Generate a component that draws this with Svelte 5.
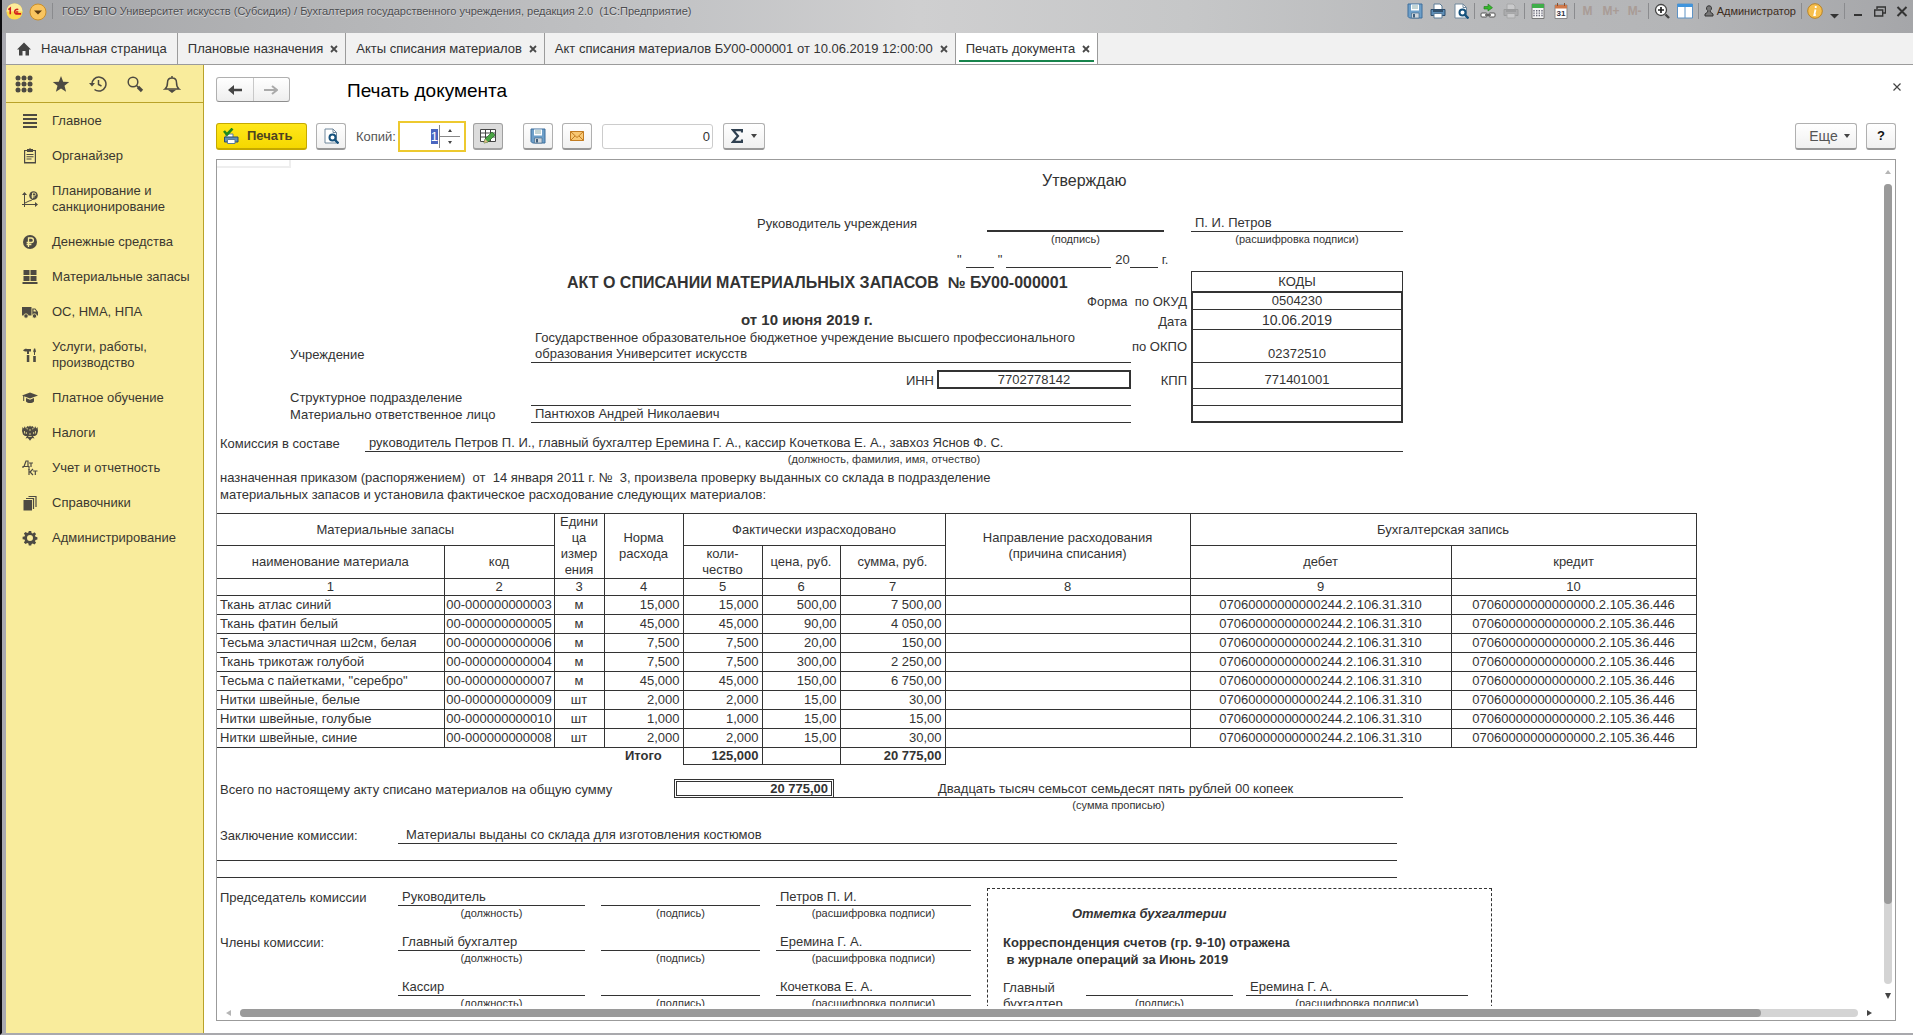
<script>
  import { onMount } from 'svelte';

  let copiesField;
  onMount(() => {
    copiesField.focus();
    copiesField.select();
  });

  const tabs = [
    'Плановые назначения',
    'Акты списания материалов',
    'Акт списания материалов БУ00-000001 от 10.06.2019 12:00:00',
    'Печать документа'
  ];

  const menu = [
    { icon: 'lines', label: 'Главное' },
    { icon: 'clipboard', label: 'Органайзер' },
    { icon: 'plan', label: 'Планирование и санкционирование' },
    { icon: 'ruble', label: 'Денежные средства' },
    { icon: 'boxes', label: 'Материальные запасы' },
    { icon: 'truck', label: 'ОС, НМА, НПА' },
    { icon: 'tools', label: 'Услуги, работы, производство' },
    { icon: 'cap', label: 'Платное обучение' },
    { icon: 'eagle', label: 'Налоги' },
    { icon: 'dtkt', label: 'Учет и отчетность' },
    { icon: 'books', label: 'Справочники' },
    { icon: 'gear', label: 'Администрирование' }
  ];

  const debit = '07060000000000244.2.106.31.310';
  const credit = '07060000000000000.2.105.36.446';
  const items = [
    ['Ткань атлас синий', '00-000000000003', 'м', '15,000', '500,00', '7 500,00'],
    ['Ткань фатин белый', '00-000000000005', 'м', '45,000', '90,00', '4 050,00'],
    ['Тесьма эластичная ш2см, белая', '00-000000000006', 'м', '7,500', '20,00', '150,00'],
    ['Ткань трикотаж голубой', '00-000000000004', 'м', '7,500', '300,00', '2 250,00'],
    ['Тесьма с пайетками, "серебро"', '00-000000000007', 'м', '45,000', '150,00', '6 750,00'],
    ['Нитки швейные, белые', '00-000000000009', 'шт', '2,000', '15,00', '30,00'],
    ['Нитки швейные, голубые', '00-000000000010', 'шт', '1,000', '15,00', '15,00'],
    ['Нитки швейные, синие', '00-000000000008', 'шт', '2,000', '15,00', '30,00']
  ];

  const members = [
    ['Председатель комиссии', 'Руководитель', 'Петров П. И.'],
    ['Члены комиссии:', 'Главный бухгалтер', 'Еремина Г. А.'],
    ['', 'Кассир', 'Кочеткова Е. А.']
  ];
</script>

{#snippet menuIcon(name)}
  <svg class="mi" viewBox="0 0 16 16" fill="#4d4a42" stroke="none" aria-hidden="true">
    {#if name === 'lines'}
      <path d="M1 1h14v2H1zM1 5h14v2H1zM1 9h14v2H1zM1 13h14v2H1z" />
    {:else if name === 'clipboard'}
      <path d="M2 2h3v1H3.2v11h9.6V3H11V2h3v13.5H2z" /><path d="M5 1h2l1-1 1 1h2v3H5zM4.5 6h7v1h-7zM4.5 8.3h7v1h-7zM4.5 10.600h5v1h-5z" />
    {:else if name === 'plan'}
      <path d="M2 3h1v10h11v1H3v2H2v-2H0v-1h2z" /><path d="M0 4l2.500-3L5 4zM13 11l3 2.500-3 2.500z" /><path d="M3 12l4-2 2-.5 3-2" fill="none" stroke="#4d4a42" />
      <circle cx="11.500" cy="4.500" r="4.300" /><path d="M10.500 7.500v-5.500h1.800a1.400 1.400 0 0 1 0 2.800H9.500m0 1.200h3" fill="none" stroke="#f9ec9c" stroke-width=".9" />
    {:else if name === 'ruble'}
      <circle cx="8" cy="8" r="7" /><path d="M6.500 13V4h2.700a2.200 2.200 0 0 1 0 4.500H4.600m0 2h4.800" fill="none" stroke="#f9ec9c" stroke-width="1.300" />
    {:else if name === 'boxes'}
      <path d="M1.500 1h6v5h-6zM8.500 1h6v5h-6zM1.500 7h6v5h-6zM8.500 7h6v5h-6zM.5 13h15v2H.5z" />
    {:else if name === 'truck'}
      <path d="M0 3h9.500v8.500H0zM10.300 4.500h3l2.700 3.500v3.500h-5.700z" /><path d="M11.500 5.500h1.400l1.500 2h-2.900z" fill="#f9ec9c" />
      <circle cx="4" cy="12" r="2.200" stroke="#f9ec9c" stroke-width=".8" /><circle cx="12.500" cy="12" r="2.200" stroke="#f9ec9c" stroke-width=".8" />
    {:else if name === 'tools'}
      <path d="M1 3.500C2 2 4 1.500 5 2h4v2.500H7V7H5V4.500H3zM4.800 8h2.500v7H4.800zM12 1.500h1.200l.8 3-1 1V8h-1V5.500l-.8-1zM11.200 9h2.600v6h-2.600z" />
    {:else if name === 'cap'}
      <path d="M8 2.500L16 5.500 8 8.500 0 5.500z" /><path d="M4 8l4 1.700L12 8v3.500c-2 2-6 2-8 0zM1.200 6h1v5h-1z" />
    {:else if name === 'eagle'}
      <path d="M8 .5l1 1.300 1.500-.8 1 1.500L10 4l1 .5 1-3 .8 2 .8-2.500.6 2.500 1.300-1.500.5 4-1 3.500-2 1.500-2 0 1.500 2.500-2-.5-1 .7L8 15.800l-1.500-2.100-1-.7-2 .5L5 11 3 11 1 9.500 0 6l.5-4L1.800 3.500 2.400 1l.8 2.500.8-2 1 3L6 4 4.500 2.500 5.500 1l1.500.8z" />
      <path d="M2.500 6v2.500M4.300 7v2M11.700 7v2M13.500 6v2.500M8 4v2M6.300 11.500h3.400M8 8v2" stroke="#f9ec9c" stroke-width=".8" />
    {:else if name === 'dtkt'}
      <path d="M1 8V6.500h6V8M2 6.500L4 1h2v5.500M7 3h4M9 3v4M7 9v6M6 9h2M11 9L8 12l3 3M11 11h4.500M13.300 11v4" fill="none" stroke="#4d4a42" stroke-width="1.200" />
    {:else if name === 'books'}
      <path d="M1.500 5h8.500v10.500H1.500z" /><path d="M4 3.500h7.500V14M6.500 1.500H14V12" fill="none" stroke="#4d4a42" stroke-width="1.200" />
    {:else}
      <path fill-rule="evenodd" d="M6.800 1h2.400l.4 1.900 1.200.5 1.600-1.100 1.700 1.700-1.100 1.600.5 1.200 1.900.4v2.400l-1.900.4-.5 1.200 1.100 1.600-1.700 1.700-1.600-1.100-1.200.5L9.200 15.400H6.800l-.4-1.900-1.200-.5-1.600 1.100-1.700-1.700L3 10.800l-.5-1.200-1.900-.4V6.800l1.900-.4L3 5.200 1.900 3.600l1.700-1.700L5.200 3l1.200-.5zM8 5a3 3 0 1 0 0 6 3 3 0 0 0 0-6z" />
    {/if}
  </svg>
{/snippet}

{#snippet floppy()}
  <svg class="i16" viewBox="0 0 16 16" aria-hidden="true"><path d="M1 1h14v14H2.500L1 13.500z" fill="#6d9fc9" stroke="#3f6f9c" /><path d="M4 1.500h8v6H4z" fill="#fff" /><path d="M5 3h6M5 5h6" stroke="#8aa" /><path d="M4.500 10h7.500v5H4.500z" fill="#cfd6dd" stroke="#49708f" stroke-width=".7" /><path d="M6 11h2v3.500H6z" fill="#3f5f7c" /></svg>
{/snippet}

{#snippet preview()}
  <svg class="i16" viewBox="0 0 16 16" aria-hidden="true"><path d="M2 1h8l3.500 3.500V15H2z" fill="#fff" stroke="#71889c" /><path d="M10 1v3.500h3.500" fill="none" stroke="#71889c" /><circle cx="9.500" cy="9.500" r="3" fill="#fff" stroke="#15517c" stroke-width="2" /><path d="M11.500 11.500l4 4" stroke="#15517c" stroke-width="2.400" /></svg>
{/snippet}

{#snippet printer(dim)}
  <svg class="i16" class:dim viewBox="0 0 16 16" aria-hidden="true"><path d="M4 1h6l2 2v4H4z" fill="#fff" stroke="#5c7c98" /><path d="M1 6.500h14v6H1z" fill="#5f8fb8" stroke="#2d4d6c" /><path d="M3 8h10" stroke="#233c55" stroke-width="1.500" /><path d="M4 10.500h8V15H4z" fill="#fff" stroke="#5c7c98" /></svg>
{/snippet}

{#snippet cross()}
  <svg class="cross" viewBox="0 0 8 8" aria-hidden="true"><path d="M1 1l6 6M7 1L1 7" stroke="#4a4a4a" stroke-width="1.800" /></svg>
{/snippet}

{#snippet tri()}
  <svg class="tri" viewBox="0 0 6 4" aria-hidden="true"><path d="M0 0h6L3 4z" fill="#444" /></svg>
{/snippet}

<div class="app">
  <header class="titlebar">
    <svg class="logo" viewBox="0 0 18 18" aria-hidden="true"><circle cx="9" cy="9" r="8.500" fill="#fbd94c" /><path d="M9 .5a8.500 8.500 0 0 1 8.500 8.500H.5A8.500 8.500 0 0 1 9 .5z" fill="#fdeb9a" /><path d="M2.500 7l2-1.500V12M13 7a2.500 2.500 0 1 0-2.500 4.500H16M13 9.500h-2.500" fill="none" stroke="#d3201d" stroke-width="1.700" /></svg>
    <button class="round" aria-label="Главное меню"><svg viewBox="0 0 18 18" aria-hidden="true"><circle cx="9" cy="9" r="8" fill="#f9c560" stroke="#c98f2c" /><path d="M5 7.500h8l-4 4z" fill="#5b3a10" /></svg></button>
    <span class="sep lead"></span>
    <span class="caption">ГОБУ ВПО Университет искусств (Субсидия) / Бухгалтерия государственного учреждения, редакция 2.0  (1С:Предприятие)</span>
    <div class="sys">
      <button aria-label="Сохранить">{@render floppy()}</button>
      <button aria-label="Печать">{@render printer(false)}</button>
      <button aria-label="Просмотр">{@render preview()}</button>
      <span class="sep"></span>
      <button aria-label="Получить ссылку"><svg class="i16" viewBox="0 0 16 16" aria-hidden="true"><path d="M4 3.500h4V1l4.500 3.700L8 8V6H4z" fill="#35b82c" stroke="#1d7a18" stroke-width=".6" /><rect x="1" y="10" width="6" height="4" rx="1" fill="#fff" stroke="#555" /><rect x="9" y="10" width="6" height="4" rx="1" fill="#fff" stroke="#555" /><path d="M5 12h6" stroke="#555" stroke-width="1.500" /></svg></button>
      <button aria-label="Перейти по ссылке">{@render printer(true)}</button>
      <span class="sep"></span>
      <button aria-label="Калькулятор"><svg class="i16" viewBox="0 0 16 16" aria-hidden="true"><path d="M2 1h12v14.500H2z" fill="#f5f5f5" stroke="#777" /><path d="M2 1h12v4H2z" fill="#3fae49" /><path d="M4 7v7M6.700 7v7M9.300 7v7M12 7v7" stroke="#667" stroke-width="1.400" stroke-dasharray="1.400 1" /></svg></button>
      <button aria-label="Календарь"><svg class="i16" viewBox="0 0 16 16" aria-hidden="true"><path d="M2 2h12v13.500H2z" fill="#fff" stroke="#888" /><path d="M2 2h12v3.500H2z" fill="#d0794b" /><path d="M4.500 0v3M11.500 0v3" stroke="#8a5030" /><text x="8" y="13" font-size="8" font-weight="bold" text-anchor="middle" fill="#334">31</text></svg></button>
      <span class="sep"></span>
      <button class="mem" disabled>M</button>
      <button class="mem" disabled>M+</button>
      <button class="mem" disabled>M-</button>
      <span class="sep"></span>
      <button aria-label="Масштаб"><svg class="i16" viewBox="0 0 16 16" aria-hidden="true"><circle cx="7" cy="7" r="5.500" fill="#fff" stroke="#444" stroke-width="1.300" /><path d="M7 4v6M4 7h6" stroke="#222" stroke-width="1.700" /><path d="M11.500 11.500l3.500 3.500" stroke="#444" stroke-width="2.400" /></svg></button>
      <button aria-label="Окна"><svg class="i16" viewBox="0 0 16 16" aria-hidden="true"><path d="M.5 1h15v14H.5z" fill="#fff" stroke="#5d92c4" /><path d="M.5 1h15v3H.5z" fill="#3f94dc" /><path d="M8 4v11" stroke="#5d92c4" /></svg></button>
      <span class="sep"></span>
      <button class="user"><svg viewBox="0 0 10 12" aria-hidden="true"><path d="M5 .8a2.300 2.500 0 0 1 1.300 4.700V7L9 9v2H1V9l2.700-2V5.500A2.300 2.500 0 0 1 5 .8z" fill="#777" stroke="#333" /></svg>Администратор</button>
      <span class="sep"></span>
      <button aria-label="Сведения"><svg class="i16" viewBox="0 0 16 16" aria-hidden="true"><circle cx="8" cy="8" r="7.300" fill="#f7bf4d" stroke="#b98325" /><path d="M8.700 3v2M8.500 6.500L7.300 12h1.500" fill="none" stroke="#fff" stroke-width="1.800" /></svg></button>
      <button class="drop" aria-label="Еще команды"><svg viewBox="0 0 9 6" aria-hidden="true"><path d="M0 1h9L4.500 5.500z" fill="#333" /></svg></button>
      <span class="sep"></span>
      <button class="win" aria-label="Свернуть"><svg viewBox="0 0 12 12" aria-hidden="true"><path d="M2 10h8" stroke="#333" stroke-width="2" /></svg></button>
      <button class="win" aria-label="Развернуть"><svg viewBox="0 0 12 12" aria-hidden="true"><path d="M3 4V2h8.500v6H9M.7 5h8v6h-8z" fill="none" stroke="#333" stroke-width="1.400" /></svg></button>
      <button class="win" aria-label="Закрыть"><svg viewBox="0 0 12 12" aria-hidden="true"><path d="M1.500 2l9 9M10.500 2l-9 9" stroke="#333" stroke-width="2" /></svg></button>
    </div>
  </header>

  <nav class="tabs">
    <div class="tab home">
      <button><svg viewBox="0 0 14 14" aria-hidden="true"><path d="M7 .5L14 7.500h-2V13.500H8.500V9h-3v4.500H2V7.500H0z" fill="#444" /></svg>Начальная страница</button>
    </div>
    {#each tabs as tab, i}
      <div class="tab" class:active={i === tabs.length - 1}>
        <button>{tab}</button>
        <button class="close" aria-label="Закрыть вкладку">{@render cross()}</button>
      </div>
    {/each}
  </nav>

  <div class="body">
    <aside class="side">
      <div class="quick">
        <button aria-label="Меню"><svg viewBox="0 0 18 18" fill="#4d4a42" aria-hidden="true">{#each [3, 9, 15] as y}{#each [3, 9, 15] as x}<circle cx={x} cy={y} r="2.500" />{/each}{/each}</svg></button>
        <button aria-label="Избранное"><svg viewBox="0 0 18 18" aria-hidden="true"><path d="M9 1l2.200 5.700 6 .3-4.700 3.800 1.600 5.900L9 13.400l-5.100 3.300 1.600-5.900L.8 7l6-.3z" fill="#4d4a42" /></svg></button>
        <button aria-label="История"><svg viewBox="0 0 18 18" fill="none" stroke="#4d4a42" stroke-width="1.500" aria-hidden="true"><path d="M3 10a7 7 0 1 1 2.500 4.500M9.500 5v4.500l3 1.500" /><path d="M0 8h6l-3 3.500z" fill="#4d4a42" stroke="none" /></svg></button>
        <button aria-label="Поиск"><svg viewBox="0 0 18 18" fill="none" stroke="#4d4a42" aria-hidden="true"><circle cx="7" cy="7" r="4.800" stroke-width="1.500" /><path d="M10.500 10.500l2 2" stroke-width="1.500" /><path d="M12 12l4 4" stroke-width="3.200" /></svg></button>
        <button aria-label="Оповещения"><svg viewBox="0 0 18 18" fill="none" stroke="#4d4a42" stroke-width="1.500" aria-hidden="true"><path d="M2 14c2-1.500 2.500-3 2.500-6.500C4.500 4.500 6.500 3 9 3s4.500 1.500 4.500 4.500c0 3.500.5 5 2.500 6.500zM9 1v2" /><path d="M7 15.500h4l-2 1.500z" fill="#4d4a42" /></svg></button>
      </div>
      <ul>
        {#each menu as m}
          <li><a href="#{m.icon}">{@render menuIcon(m.icon)}<span>{m.label}</span></a></li>
        {/each}
      </ul>
    </aside>

    <main>
      <div class="head">
        <div class="navbtns">
          <button aria-label="Назад"><svg viewBox="0 0 14 10" aria-hidden="true"><path d="M6 0v3.800h8v2.400H6V10L0 5z" fill="#444" /></svg></button>
          <button aria-label="Вперед"><svg viewBox="0 0 14 10" aria-hidden="true"><path d="M8 1l5 4-5 4M0 5h12" fill="none" stroke="#aaa" stroke-width="2" /></svg></button>
        </div>
        <h1>Печать документа</h1>
        <button class="closeform" aria-label="Закрыть"><svg viewBox="0 0 8 8" aria-hidden="true"><path d="M.5.5l7 7M7.500.5l-7 7" stroke="#444" stroke-width="1.200" /></svg></button>
      </div>

      <div class="toolbar">
        <button class="btn print"><svg class="i16" viewBox="0 0 16 16" aria-hidden="true"><path d="M3 6h7v4H3z" fill="#fff" stroke="#5c7c98" /><path d="M1.500 9h13.500v5H1.500z" fill="#5f8fb8" stroke="#2d4d6c" /><path d="M4.500 11.500h7.500v4H4.500z" fill="#fff" stroke="#5c7c98" /><path d="M1 3l3 3.500L9.500.5" fill="none" stroke="#1f8a1c" stroke-width="2.600" /></svg>Печать</button>
        <button class="btn sq preview" aria-label="Предварительный просмотр">{@render preview()}</button>
        <label for="copies">Копий:</label>
        <div class="spin">
          <input id="copies" type="text" value="1" bind:this={copiesField} />
          <div class="steps"><button aria-label="Больше"><svg viewBox="0 0 4 3" aria-hidden="true"><path d="M0 3h4L2 0z" fill="#444" /></svg></button><button aria-label="Меньше"><svg viewBox="0 0 4 3" aria-hidden="true"><path d="M0 0h4L2 3z" fill="#444" /></svg></button></div>
        </div>
        <button class="btn sq on" aria-label="Редактирование"><svg class="i16" viewBox="0 0 16 16" aria-hidden="true"><path d="M.5 1.500h15v12H.5zM.5 5h15M.5 9h15M5.500 1.500v12M10.500 1.500v12" fill="#fff" stroke="#444" /><path d="M4 15l1-4 7-7 3 3-7 7z" fill="#4aa544" stroke="#276b25" stroke-width=".7" /><path d="M4 15l1-4 3 3z" fill="#e2b98a" /></svg></button>
        <button class="btn sq save" aria-label="Сохранить файл">{@render floppy()}</button>
        <button class="btn sq mail" aria-label="Отправить"><svg class="i16" viewBox="0 0 16 16" aria-hidden="true"><path d="M1.500 3.500h13v9h-13z" fill="#f8c873" stroke="#c27c22" /><path d="M1.500 3.500l6.500 6 6.500-6M1.500 12.500L6 8M14.500 12.500L10 8" fill="none" stroke="#c27c22" /></svg></button>
        <input class="sum" type="text" value="0" aria-label="Сумма ячеек" readonly />
        <button class="btn sigma" aria-label="Сумма"><svg class="sg" viewBox="0 0 12 14" aria-hidden="true"><path d="M11 3.500V1.200H2l5 5.800-5 5.800h9v-2.300" fill="none" stroke="#2f4050" stroke-width="2.200" /></svg>{@render tri()}</button>
        <button class="btn more">Еще {@render tri()}</button>
        <button class="btn help" aria-label="Справка">?</button>
      </div>

      <section class="pane">
        <div class="view">
          <div class="cellmark"></div>
          <div class="doc">
            <p class="approve">Утверждаю</p>
            <div class="row sign">
              <span>Руководитель учреждения</span><span class="bold-line"></span><span></span><span class="u">П. И. Петров</span>
            </div>
            <div class="row sign cap"><span></span><span class="ctr">(подпись)</span><span></span><span class="ctr">(расшифровка подписи)</span></div>
            <div class="datefill"><span>"</span><i class="b28"></i><span>"</span><i class="b105"></i><span>20</span><i class="b28 tight"></i><span>г.</span></div>

            <div class="form">
              <h2>АКТ О СПИСАНИИ МАТЕРИАЛЬНЫХ ЗАПАСОВ  № БУ00-000001</h2>
              <span class="code codes">КОДЫ</span>
              <span class="lab wide">Форма  по ОКУД</span><span class="code">0504230</span>
              <h3>от 10 июня 2019 г.</h3>
              <span class="lab">Дата</span><span class="code big">10.06.2019</span>
              <span class="name">Учреждение</span>
              <span class="val u">Государственное образовательное бюджетное учреждение высшего профессионального образования Университет искусств</span>
              <span class="lab mid">по ОКПО</span><span class="code">02372510</span>
              <span class="lab inn">ИНН</span><span class="innbox">7702778142</span>
              <span class="lab">КПП</span><span class="code">771401001</span>
              <span class="name">Структурное подразделение</span><span class="val u"></span><span class="code"></span>
              <span class="name">Материально ответственное лицо</span><span class="val u">Пантюхов Андрей Николаевич</span><span class="code last"></span>
            </div>

            <div class="row board"><span>Комиссия в составе</span><span class="u">руководитель Петров П. И., главный бухгалтер Еремина Г. А., кассир Кочеткова Е. А., завхоз Яснов Ф. С.</span></div>
            <div class="row board cap"><span></span><span class="ctr">(должность, фамилия, имя, отчество)</span></div>
            <p class="order">назначенная приказом (распоряжением)  от  14 января 2011 г. №  3, произвела проверку выданных со склада в подразделение<br />материальных запасов и установила фактическое расходование следующих материалов:</p>

            <table>
              <colgroup><col class="w227" /><col class="w110" /><col class="w50" /><col class="w79" /><col class="w79" /><col class="w78" /><col class="w105" /><col class="w245" /><col class="w261" /><col class="w245" /></colgroup>
              <thead>
                <tr class="h1"><th colspan="2">Материальные запасы</th><th rowspan="2">Едини<br />ца<br />измер<br />ения</th><th rowspan="2">Норма расхода</th><th colspan="3">Фактически израсходовано</th><th rowspan="2">Направление расходования<br />(причина списания)</th><th colspan="2">Бухгалтерская запись</th></tr>
                <tr class="h2"><th>наименование материала</th><th>код</th><th>коли-<br />чество</th><th>цена, руб.</th><th>сумма, руб.</th><th>дебет</th><th>кредит</th></tr>
                <tr class="h3">{#each Array(10) as _, n}<th>{n + 1}</th>{/each}</tr>
              </thead>
              <tbody>
                {#each items as r}
                  <tr><td>{r[0]}</td><td class="ctr">{r[1]}</td><td class="ctr">{r[2]}</td><td class="num">{r[3]}</td><td class="num">{r[3]}</td><td class="num">{r[4]}</td><td class="num">{r[5]}</td><td></td><td class="ctr">{debit}</td><td class="ctr">{credit}</td></tr>
                {/each}
              </tbody>
              <tfoot>
                <tr><td class="none" colspan="3"></td><td class="none ctr">Итого</td><td class="num">125,000</td><td></td><td class="num">20 775,00</td><td class="none" colspan="3"></td></tr>
              </tfoot>
            </table>

            <div class="row total"><span>Всего по настоящему акту списано материалов на общую сумму</span><span class="dbl">20 775,00</span><span class="u">Двадцать тысяч семьсот семьдесят пять рублей 00 копеек</span></div>
            <div class="row total cap"><span></span><span></span><span class="ctr">(сумма прописью)</span></div>
            <div class="row concl"><span>Заключение комиссии:</span><span class="u">Материалы выданы со склада для изготовления костюмов</span></div>
            <div class="rule"></div>
            <div class="rule"></div>

            <div class="bottom">
              <div class="members">
                {#each members as m}
                  <div class="row member"><span>{m[0]}</span><span class="u">{m[1]}</span><span class="u"></span><span class="u">{m[2]}</span></div>
                  <div class="row member cap"><span></span><span class="ctr">(должность)</span><span class="ctr">(подпись)</span><span class="ctr">(расшифровка подписи)</span></div>
                {/each}
              </div>
              <div class="mark">
                <h4>Отметка бухгалтерии</h4>
                <p class="corr">Корреспонденция счетов (гр. 9-10) отражена<br />   в журнале операций за Июнь 2019</p>
                <div class="row acc"><span>Главный</span><span class="u"></span><span class="u">Еремина Г. А.</span></div>
                <div class="row acc cap"><span class="full">бухгалтер</span><span class="ctr">(подпись)</span><span class="ctr">(расшифровка подписи)</span></div>
              </div>
            </div>
          </div>
        </div>
        <div class="vbar"><svg viewBox="0 0 6 6" aria-hidden="true"><path d="M0 5h6L3 1z" fill="#b5b5b5" /></svg><div class="track"><div class="thumb"></div></div><svg viewBox="0 0 6 6" aria-hidden="true"><path d="M0 0h6L3 6z" fill="#444" /></svg></div>
        <div class="hbar"><svg viewBox="0 0 5 6" aria-hidden="true"><path d="M5 0v6L0 3z" fill="#b5b5b5" /></svg><div class="track"><div class="thumb"></div></div><svg viewBox="0 0 5 6" aria-hidden="true"><path d="M0 0v6l5-3z" fill="#444" /></svg></div>
      </section>
    </main>
  </div>
</div>

<style>
  :global(body) { margin: 0; }
  .app, .app :global(*) { box-sizing: border-box; }
  .app {
    height: 100vh;
    display: flex;
    flex-direction: column;
    font: 13px/16px "Liberation Sans", Arial, sans-serif;
    color: #333;
    background: #fff;
    border-left: 2px solid #0d0d10;
    border-bottom: 2px solid #a9a9ad;
    overflow: hidden;
  }
  button { font: inherit; color: inherit; padding: 0; border: 0; background: none; display: flex; align-items: center; justify-content: center; }
  input { font: inherit; color: inherit; }
  svg { display: block; flex: none; }
  .i16 { width: 16px; height: 16px; }
  .dim { opacity: .25; filter: grayscale(1); }
  .cross { width: 8px; height: 8px; }
  .tri { width: 6px; height: 4px; }

  .titlebar {
    height: 33px;
    flex: none;
    display: flex;
    align-items: flex-start;
    padding: 3px 4px 0 4px;
    background: linear-gradient(90deg, #a4a5a8 0%, #b2b3b5 15%, #c2c3c5 35%, #cfcfd0 48%, #c6c7c8 62%, #b9babc 75%, #b4b5b7 88%, #a5a6a9 100%);
  }
  .logo { width: 17px; height: 17px; }
  .round { margin-left: 6px; }
  .round svg { width: 18px; height: 18px; }
  .sep { width: 1px; height: 16px; background: #8a8b8e; }
  .lead { margin-left: 5px; }
  .caption { margin-left: 9px; font-size: 11px; color: #4c4d50; white-space: pre; text-shadow: 0 1px 1px #e4e4e4; }
  .sys { margin-left: auto; display: flex; align-items: center; gap: 7px; }
  .sys .sep { margin: 0 -2px; }
  .sys button { min-width: 16px; height: 16px; }
  .mem { font-size: 12px; font-weight: bold; color: #a99c96; }
  .user { gap: 3px; font-size: 11px; color: #3c2c1c; }
  .user svg { width: 10px; height: 12px; }
  .drop svg { width: 9px; height: 6px; }
  .sys .drop { min-width: 9px; align-items: flex-end; }
  .sys .win { width: 15px; min-width: 15px; }
  .win svg { width: 12px; height: 12px; }

  .tabs { height: 32px; flex: none; display: flex; background: #f1f1f1; border-bottom: 1px solid #9b9b9b; border-left: 4px solid #a9a9b0; }
  .tab { display: flex; align-items: center; gap: 7px; padding: 0 7px 0 10px; border-right: 1px solid #9b9b9b; position: relative; white-space: nowrap; }
  .home { padding: 0 10px 0 11px; }
  .home button { gap: 10px; }
  .home svg { width: 14px; height: 14px; }
  .active { background: #fff; }
  .active::after { content: ""; position: absolute; left: 3px; right: 3px; bottom: 2px; height: 2px; background: #17844c; }

  .body { flex: 1; min-height: 0; display: flex; border-left: 4px solid #a9a9b0; }
  .side { width: 198px; flex: none; background: #f9ec9c; border-right: 1px solid #b9a229; }
  .quick { height: 38px; display: flex; align-items: center; gap: 19px; padding-left: 9px; border-bottom: 1px solid #b9a229; }
  .quick svg { width: 18px; height: 18px; }
  ul { list-style: none; margin: 0; padding: 1px 0 0; }
  li a { display: flex; align-items: center; min-height: 35px; padding: 9px 0 10px 16px; gap: 14px; color: #3b3830; text-decoration: none; }
  li span { max-width: 140px; }
  .mi { width: 16px; height: 16px; }

  main { flex: 1; min-width: 0; display: flex; flex-direction: column; padding: 12px 17px 12px 12px; }
  .head { display: flex; align-items: center; height: 25px; flex: none; }
  .navbtns { display: flex; width: 74px; height: 25px; border: 1px solid #b0b0b0; border-bottom-color: #8e8e8e; border-radius: 3px; background: linear-gradient(#fff, #eee); }
  .navbtns button { flex: 1; }
  .navbtns button + button { border-left: 1px solid #c8c8c8; }
  .navbtns svg { width: 14px; height: 10px; }
  h1 { font-size: 19px; line-height: 24px; font-weight: normal; color: #000; margin: 3px 0 0 57px; }
  .closeform { margin-left: auto; width: 8px; margin-right: -5px; align-self: flex-start; padding-top: 6px; }
  .closeform svg { width: 8px; height: 8px; }

  .toolbar { display: flex; align-items: center; height: 31px; flex: none; margin: 19px 0 7px; }
  .btn { height: 27px; border: 1px solid #b0b0b0; border-bottom: 2px solid #979797; border-radius: 3px; background: linear-gradient(#fff, #f0f0f0); }
  .sq { width: 30px; }
  .print { width: 91px; gap: 8px; justify-content: flex-start; padding-left: 6px; font-weight: bold; background: linear-gradient(#ffe71a, #f5d800); border-color: #c5a900; color: #4d4420; }
  .preview { margin-left: 9px; }
  label { margin-left: 10px; color: #555; }
  .spin { display: flex; align-items: center; width: 68px; height: 31px; border: 2px solid #edc92f; margin-left: 2px; padding-right: 4px; }
  .spin input { width: 38px; height: 18px; border: 0; outline: 0; padding: 0; text-align: right; margin-right: 1px; }
  .spin input::selection { background: #4a66c0; color: #fff; }
  .steps { flex: 1; height: 23px; border-left: 1px solid #888; display: flex; flex-direction: column; }
  .steps button { flex: 1; }
  .steps button + button { border-top: 1px solid #888; }
  .steps svg { width: 4px; height: 3px; }
  .on { margin-left: 7px; background: #dcdcdc; border-color: #a0a0a0; }
  .save { margin-left: 20px; }
  .mail { margin-left: 9px; }
  .sum { width: 111px; height: 25px; margin-left: 10px; border: 1px solid #ccc; border-radius: 3px; text-align: right; padding: 0 2px; }
  .sigma { width: 42px; gap: 8px; margin-left: 10px; }
  .sg { width: 12px; height: 14px; }
  .more { width: 62px; gap: 6px; margin-left: auto; color: #555; font-size: 14px; padding-left: 7px; }
  .help { width: 30px; margin-left: 9px; font-weight: bold; color: #111; }

  .pane { flex: 1; min-height: 0; border: 1px solid #9b9b9b; display: grid; grid-template-columns: minmax(0, 1fr) 14px; grid-template-rows: minmax(0, 1fr) 14px; }
  .view { overflow: hidden; position: relative; }
  .cellmark { position: absolute; left: 0; top: 0; width: 74px; height: 8px; border: solid #eee; border-width: 0 2px 2px 0; }
  .vbar { display: flex; flex-direction: column; align-items: center; padding: 9px 0 7px; gap: 9px; }
  .vbar .track { flex: 1; width: 8px; }
  .vbar .thumb { width: 8px; height: 90%; }
  .vbar svg { width: 6px; height: 6px; }
  .hbar { grid-column: 1 / -1; display: flex; align-items: center; padding: 0 23px 0 9px; gap: 9px; }
  .hbar .track { flex: 1; height: 8px; }
  .hbar .thumb { width: 94%; height: 8px; }
  .hbar svg { width: 5px; height: 6px; }
  .track { background: #d4d4d4; border-radius: 4px; }
  .thumb { background: #9a9a9a; border-radius: 4px; }

  .doc { width: 1479px; padding-top: 11px; }
  .doc p, .doc h2, .doc h3, .doc h4 { margin: 0; }
  .approve { font-size: 16px; line-height: 20px; height: 25px; padding-left: 825px; }
  .row { display: grid; white-space: pre; }
  .row > span { display: flex; align-items: flex-end; padding: 0 3px; }
  .row > .u, .val.u { border-bottom: 1px solid #333; padding: 0 4px; }
  .row > .ctr, .ctr { justify-content: center; text-align: center; }
  .cap { font-size: 11px; line-height: 14px; height: 14px; }
  .sign { grid-template-columns: 537px 233px 177px 27px 212px; }
  .sign > :nth-child(1) { grid-column: 2; }
  .sign:not(.cap) { height: 36px; }
  .row > .bold-line { border-bottom: 2px solid #333; }
  .datefill { height: 25px; display: flex; align-items: flex-end; gap: 4px; padding: 0 0 3px 740px; }
  .datefill i { border-bottom: 1px solid #333; height: 16px; }
  .b28 { width: 28px; }
  .b105 { width: 105px; }
  .datefill .tight { margin-left: -4px; }

  .form { display: grid; width: 1186px; grid-template-columns: 73px 241px 406px 194px 60px 212px; grid-template-rows: 22px 17px 20px 33px 26px 17px 17px; white-space: pre; }
  .form > * { display: flex; align-items: flex-end; }
  h2 { grid-column: 3 / 6; font-size: 16px; line-height: 20px; padding-left: 36px; }
  h3 { grid-column: 3 / 5; font-size: 15px; line-height: 20px; padding-left: 210px; }
  .lab { justify-content: flex-end; padding-right: 4px; grid-column: 5; }
  .lab.wide { grid-column: 4 / 6; }
  .lab.mid { align-items: center; }
  .lab.inn { grid-column: 3; padding-right: 3px; }
  .innbox { grid-column: 4; align-self: end; height: 19px; border: 2px solid #333; justify-content: center; }
  .form > .innbox { align-items: flex-start; }
  .name { grid-column: 2; }
  .val { grid-column: 3 / 5; white-space: pre-wrap; }
  .code { grid-column: 6; justify-content: center; border: solid #333; border-width: 0 2px 1px; }
  .code.codes { border-width: 1px 1px 2px; align-items: center; }
  .code.big { font-size: 14px; align-items: center; }
  .code.last { border-bottom-width: 2px; }

  .board { grid-template-columns: 148px 1038px; }
  .board:not(.cap) { height: 29px; }
  .order { line-height: 17px; padding: 3px 3px 0; white-space: pre; height: 47px; }

  table { border-collapse: collapse; table-layout: fixed; width: 1479px; margin-bottom: 1px; }
  .w227 { width: 227px; }
  .w110 { width: 110px; }
  .w50 { width: 50px; }
  .w79 { width: 79px; }
  .w78 { width: 78px; }
  .w105 { width: 105px; }
  .w245 { width: 245px; }
  .w261 { width: 261px; }
  th, td { border: 1px solid #333; padding: 0 3px; font-weight: normal; }
  th { padding: 0 2px; }
  th:first-child, td:first-child { border-left: 0; }
  td { white-space: nowrap; height: 19px; }
  td.ctr { padding: 0 1px; }
  .h1 { height: 32px; }
  .h2 { height: 33px; }
  .h3 { height: 17px; }
  .num { text-align: right; }
  tfoot td { height: 17px; font-weight: bold; }
  td.none { border: 0; }

  .total { grid-template-columns: 457px 160px 569px; }
  .total:not(.cap) { margin-top: 14px; height: 19px; }
  .row > .dbl { border: 3px double #333; justify-content: flex-end; font-weight: bold; align-items: center; line-height: 13px; }
  .total.cap { margin-bottom: 1px; }
  .concl { grid-template-columns: 181px 999px; height: 31px; }
  .row.concl > .u { padding-left: 8px; }
  .row.total > .u { padding-left: 104px; }
  .rule { width: 1180px; height: 17px; border-bottom: 1px solid #333; }

  .bottom { display: flex; margin-top: 10px; }
  .members { width: 770px; flex: none; }
  .member { grid-template-columns: 165px 187px 159px 195px; column-gap: 16px; height: 18px; }
  .member.cap { height: 27px; }
  .member.cap > span { align-items: flex-start; }
  .mark { width: 505px; border: 1px dashed #333; padding: 17px 0 0 12px; }
  h4, .corr { font-size: 13px; font-weight: bold; }
  h4 { font-style: italic; padding: 0 0 12px 72px; }
  .corr { line-height: 17px; padding: 0 3px; white-space: pre; }
  .acc { grid-template-columns: 73px 147px 222px; column-gap: 13px; height: 28px; }
  .acc.cap { height: 16px; }
  .acc.cap > span { align-items: flex-start; }
  .row > .full { font-size: 13px; line-height: 16px; }
</style>
